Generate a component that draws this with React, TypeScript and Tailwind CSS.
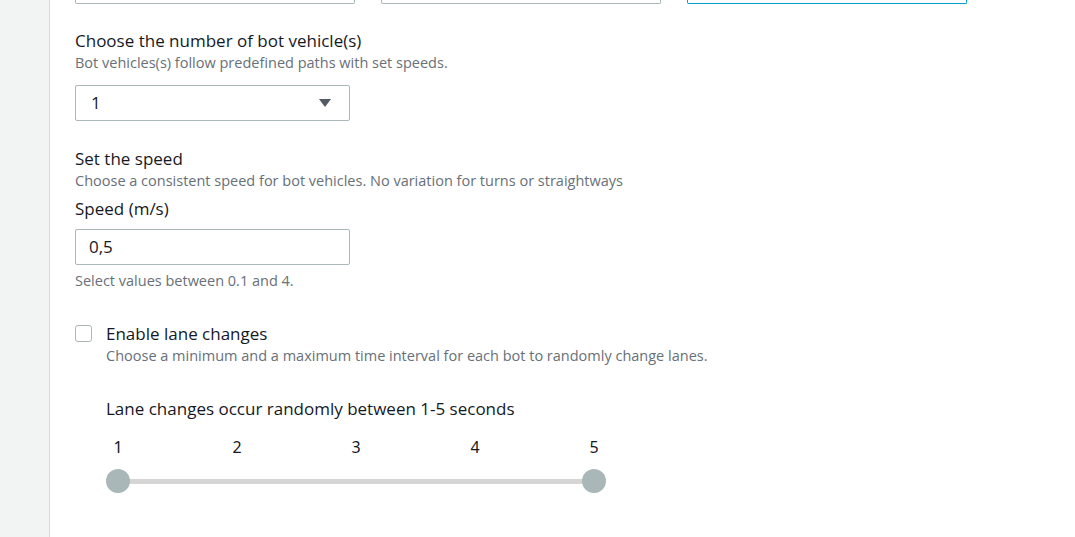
export default function App() {
  const ticks = [1, 2, 3, 4, 5];
  return (
    <div className="flex min-h-[537px] w-full bg-white font-['Open_Sans',sans-serif] text-[#16191f]">
      <aside className="w-[50px] shrink-0 border-r border-[#d5dbdb] bg-[#f2f3f3]" />
      <main className="flex flex-col pl-[25px]">
        <div className="flex gap-[26px]">
          <div className="h-[4px] w-[280px] rounded-b-[2px] border-x border-b border-[#aab7b8]" />
          <div className="h-[4px] w-[280px] rounded-b-[2px] border-x border-b border-[#aab7b8]" />
          <div className="h-[4px] w-[280px] rounded-b-[2px] border-x border-b border-[#00a1c9]" />
        </div>

        <h3 className="mt-[26px] text-[17px] leading-[22px]">Choose the number of bot vehicle(s)</h3>
        <p className="mt-[2px] text-[14.5px] leading-[18px] text-[#687078]">
          Bot vehicles(s) follow predefined paths with set speeds.
        </p>
        <div className="mt-[13px] flex h-[36px] w-[275px] items-center justify-between rounded-[2px] border border-[#aab7b8] pl-[15px] pr-[18px]">
          <span className="text-[17px]">1</span>
          <svg width="12" height="8" viewBox="0 0 12 8">
            <path d="M0 0h12L6 8z" fill="#545b64" />
          </svg>
        </div>

        <h3 className="mt-[27px] text-[17px] leading-[22px]">Set the speed</h3>
        <p className="mt-[2px] text-[14.5px] leading-[18px] text-[#687078]">
          Choose a consistent speed for bot vehicles. No variation for turns or straightways
        </p>
        <label className="mt-[8px] text-[17px] leading-[22px]">Speed (m/s)</label>
        <div className="mt-[9px] flex h-[36px] w-[275px] items-center rounded-[2px] border border-[#aab7b8] pl-[13px]">
          <span className="text-[17px]">0,5</span>
        </div>
        <p className="mt-[7px] text-[14.5px] leading-[18px] text-[#687078]">Select values between 0.1 and 4.</p>

        <div className="mt-[33px] flex gap-[14px]">
          <div className="mt-[2px] h-[17px] w-[17px] rounded-[3px] border border-[#aab7b8]" />
          <div className="flex flex-col">
            <span className="text-[17px] leading-[22px]">Enable lane changes</span>
            <span className="mt-[2px] text-[14.5px] leading-[18px] text-[#687078]">
              Choose a minimum and a maximum time interval for each bot to randomly change lanes.
            </span>
          </div>
        </div>

        <div className="ml-[31px] flex w-[500px] flex-col">
          <p className="mt-[33px] text-[17px] leading-[22px]">Lane changes occur randomly between 1-5 seconds</p>
          <div className="mt-[17px] flex justify-between font-['Noto_Sans',sans-serif] text-[16px] leading-[20px]">
            {ticks.map((t) => (
              <span key={t} className="w-[24px] text-center">
                {t}
              </span>
            ))}
          </div>
          <div className="relative mt-[12px] h-[24px]">
            <div className="absolute left-[12px] right-[12px] top-[10px] h-[5px] bg-[#d5d5d5]" />
            <div className="absolute left-0 top-0 h-[24px] w-[24px] rounded-full bg-[#aab7b8]" />
            <div className="absolute right-0 top-0 h-[24px] w-[24px] rounded-full bg-[#aab7b8]" />
          </div>
        </div>
      </main>
    </div>
  );
}
